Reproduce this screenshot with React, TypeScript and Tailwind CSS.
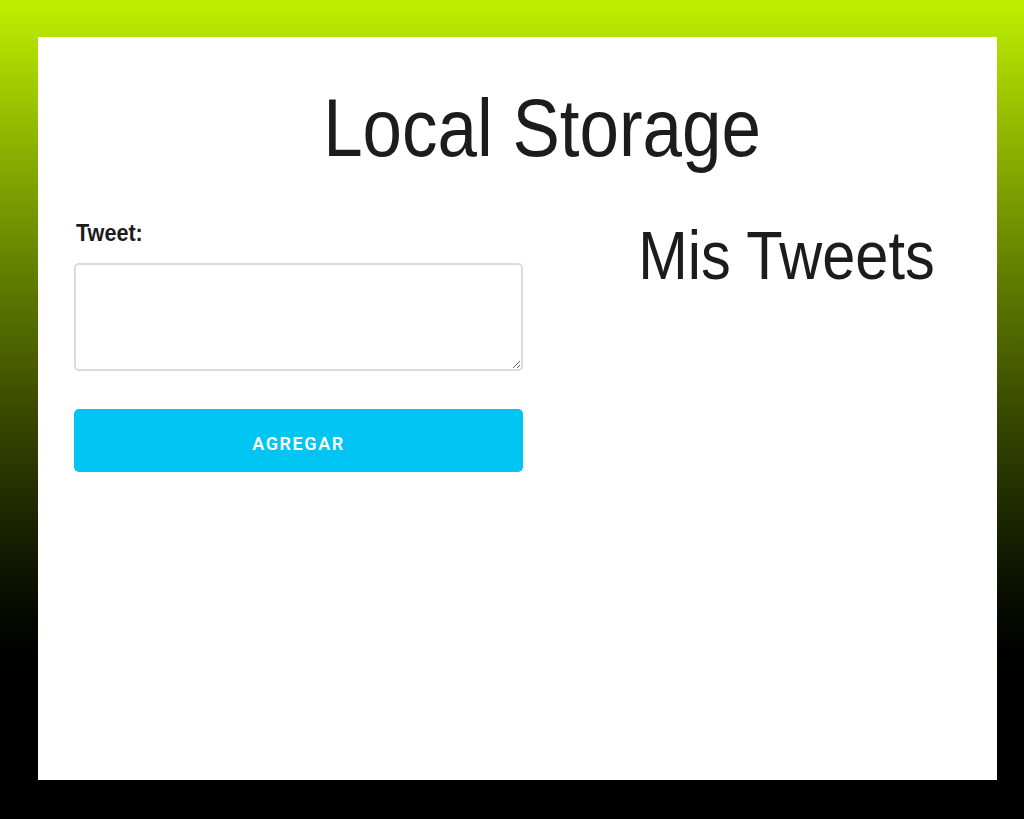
import React from "react";

const App: React.FC = () => {
  return (
    <div className="h-[819px] w-full bg-linear-to-b from-[#c0f000] to-black to-[88%] pb-[39px] pl-[38px] pr-[27px] pt-[37px] font-['Liberation_Sans',Arial,sans-serif]">
      <div className="flex h-full w-full flex-col bg-white pt-[50px]">
        <div className="flex justify-center pl-[50px]">
          <h1 className="inline-block scale-x-[0.865] text-[82px] font-normal leading-none text-[#1c1c1c]">
            Local Storage
          </h1>
        </div>
        <div className="mt-[52px] flex pl-[36px]">
          <form className="flex w-[449px] flex-col">
            <label className="ml-[2px] inline-block origin-left scale-x-[0.9] text-[24px] font-bold leading-none text-[#1c1c1c]">
              Tweet:
            </label>
            <textarea className="mt-[18px] h-[108px] w-full rounded-[5px] border-2 border-[#dadada] bg-white p-2 outline-none" />
            <button
              type="button"
              className="mt-[38px] h-[63px] w-full rounded-[5px] bg-[#00c5f3] pt-[5px] font-['Roboto',sans-serif] text-[18px] font-semibold tracking-[1.6px] text-white"
            >
              AGREGAR
            </button>
          </form>
          <div className="ml-[52px] flex flex-1 justify-center">
            <h2 className="inline-block scale-x-[0.875] text-[68px] font-normal leading-none text-[#1c1c1c]">
              Mis Tweets
            </h2>
          </div>
        </div>
      </div>
    </div>
  );
};

export default App;
